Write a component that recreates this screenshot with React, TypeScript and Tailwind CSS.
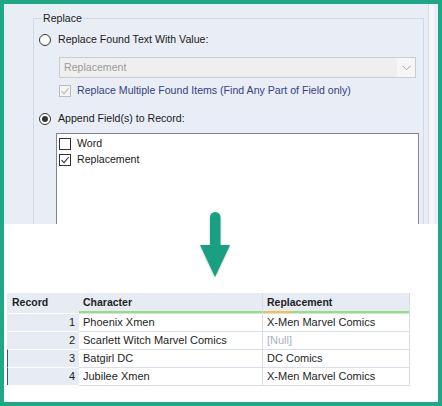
import React from 'react'

function Radio({ checked }: { checked?: boolean }) {
  return (
    <span className="w-[12px] h-[12px] rounded-full border border-[#333] bg-white flex items-center justify-center shrink-0">
      {checked && <span className="w-[6px] h-[6px] rounded-full bg-[#333]" />}
    </span>
  )
}

function Check({ checked, disabled }: { checked?: boolean; disabled?: boolean }) {
  const stroke = disabled ? '#b8b8b8' : '#333'
  return (
    <span
      className={`w-[12px] h-[12px] border shrink-0 flex items-center justify-center ${
        disabled ? 'border-[#bcbcbc] bg-[#f4f4f4]' : 'border-[#333] bg-white'
      }`}
    >
      {checked && (
        <svg width="10" height="10" viewBox="0 0 10 10">
          <path d="M1.5 5.2 L4 7.6 L8.7 2" fill="none" stroke={stroke} strokeWidth="1.1" />
        </svg>
      )}
    </span>
  )
}

const rows = [
  { n: 1, c: 'Phoenix Xmen', r: 'X-Men Marvel Comics', mark: false },
  { n: 2, c: 'Scarlett Witch Marvel Comics', r: null, mark: false },
  { n: 3, c: 'Batgirl DC', r: 'DC Comics', mark: true },
  { n: 4, c: 'Jubilee Xmen', r: 'X-Men Marvel Comics', mark: true },
]

export default function App() {
  return (
    <div className="w-[442px] h-[406px] border-4 border-[#1fa887] bg-white relative overflow-hidden flex flex-col font-['Liberation_Sans',Arial,sans-serif]">
      {/* dialog screenshot */}
      <div className="h-[220px] bg-[#e9edf6] flex shrink-0">
        <div className="w-[29px] shrink-0" />
        <div className="w-[391px] mt-[14px] border border-b-0 border-[#d3d8e2] relative flex flex-col text-[10.6px] text-[#1a1a1a]">
          <span className="absolute -top-[8px] left-[8px] px-px bg-[#e9edf6] leading-[14px]">Replace</span>

          <div className="mt-[14px] ml-[5px] h-[14px] flex items-center gap-[7px]">
            <Radio />
            <span>Replace Found Text With Value:</span>
          </div>

          <div className="mt-[10px] ml-[25px] w-[357px] h-[21px] border border-[#cccccc] bg-[#efefef] flex">
            <span className="flex-1 pl-[4px] flex items-center text-[#9c9c9c]">Replacement</span>
            <span className="w-[18px] bg-[#f6f6f6] flex items-center justify-center">
              <svg width="9" height="6" viewBox="0 0 9 6">
                <path d="M0.5 0.8 L4.5 4.8 L8.5 0.8" fill="none" stroke="#a8a8a8" strokeWidth="1" />
              </svg>
            </span>
          </div>

          <div className="mt-[6px] ml-[25px] h-[14px] flex items-center gap-[6px]">
            <Check checked disabled />
            <span className="text-[#34437a]">Replace Multiple Found Items (Find Any Part of Field only)</span>
          </div>

          <div className="mt-[14px] ml-[5px] h-[14px] flex items-center gap-[7px]">
            <Radio checked />
            <span>Append Field(s) to Record:</span>
          </div>

          <div className="mt-[7px] ml-[22px] w-[363px] flex-1 border border-b-0 border-[#80858e] bg-white pt-[2px] pl-[2px]">
            <div className="h-[16px] flex items-center gap-[6px]">
              <Check />
              <span>Word</span>
            </div>
            <div className="h-[16px] flex items-center gap-[6px]">
              <Check checked />
              <span>Replacement</span>
            </div>
          </div>
        </div>
        <div className="w-[4px] shrink-0" />
        <div className="w-[6px] shrink-0 border-l border-[#d6dbe5] bg-[#f4f6fa]" />
      </div>

      {/* arrow */}
      <svg
        className="absolute left-[193px] top-[205px] drop-shadow-[0_1px_1px_rgba(0,0,0,0.25)]"
        width="36"
        height="74"
        viewBox="0 0 36 74"
      >
        <rect x="13" y="3" width="10.5" height="40" rx="5.2" fill="#18a081" />
        <path d="M3 36 L33 36 L18 68 Z" fill="#18a081" />
      </svg>

      {/* results table */}
      <div className="mt-[69px] ml-[3px] w-[403px] grid grid-cols-[72px_184px_147px] text-[11px] text-[#1e1e1e]">
        <div className="h-[20px] bg-[#e6ebf4] border-l border-transparent border-r border-[#d6dce8] pl-[4px] flex items-center font-bold text-[10.5px]">
          Record
        </div>
        <div className="h-[20px] bg-[#e6ebf4] border-r border-[#d6dce8] relative pl-[4px] flex items-center font-bold text-[10.5px]">
          Character
          <span className="absolute left-0 right-0 bottom-0 h-[2px] bg-[#92e27a]" />
        </div>
        <div className="h-[20px] bg-[#e6ebf4] border-r border-[#d6dce8] relative pl-[4px] flex items-center font-bold text-[10.5px]">
          Replacement
          <span className="absolute left-0 right-0 bottom-0 h-[2px] bg-[#92e27a]" />
          <span className="absolute left-[1px] w-[29px] bottom-0 h-[2px] bg-[#f2c14a]" />
        </div>
        {rows.map((row) => (
          <React.Fragment key={row.n}>
            <div
              className={`h-[18px] bg-[#e6ebf4] border-t border-white border-l pr-[4px] flex items-center justify-end ${
                row.mark ? 'border-l-[#3d5283]' : 'border-l-transparent'
              }`}
            >
              {row.n}
            </div>
            <div className="h-[18px] bg-white border-t border-r border-[#d9dee9] pl-[4px] flex items-center whitespace-nowrap overflow-hidden">
              {row.c}
            </div>
            <div className="h-[18px] bg-white border-t border-r border-[#d9dee9] pl-[4px] flex items-center whitespace-nowrap">
              {row.r ?? <span className="text-[#a9b1be]">[Null]</span>}
            </div>
          </React.Fragment>
        ))}
        <div className="col-span-3 h-px bg-[#d9dee9] ml-[72px]" />
      </div>
    </div>
  )
}
